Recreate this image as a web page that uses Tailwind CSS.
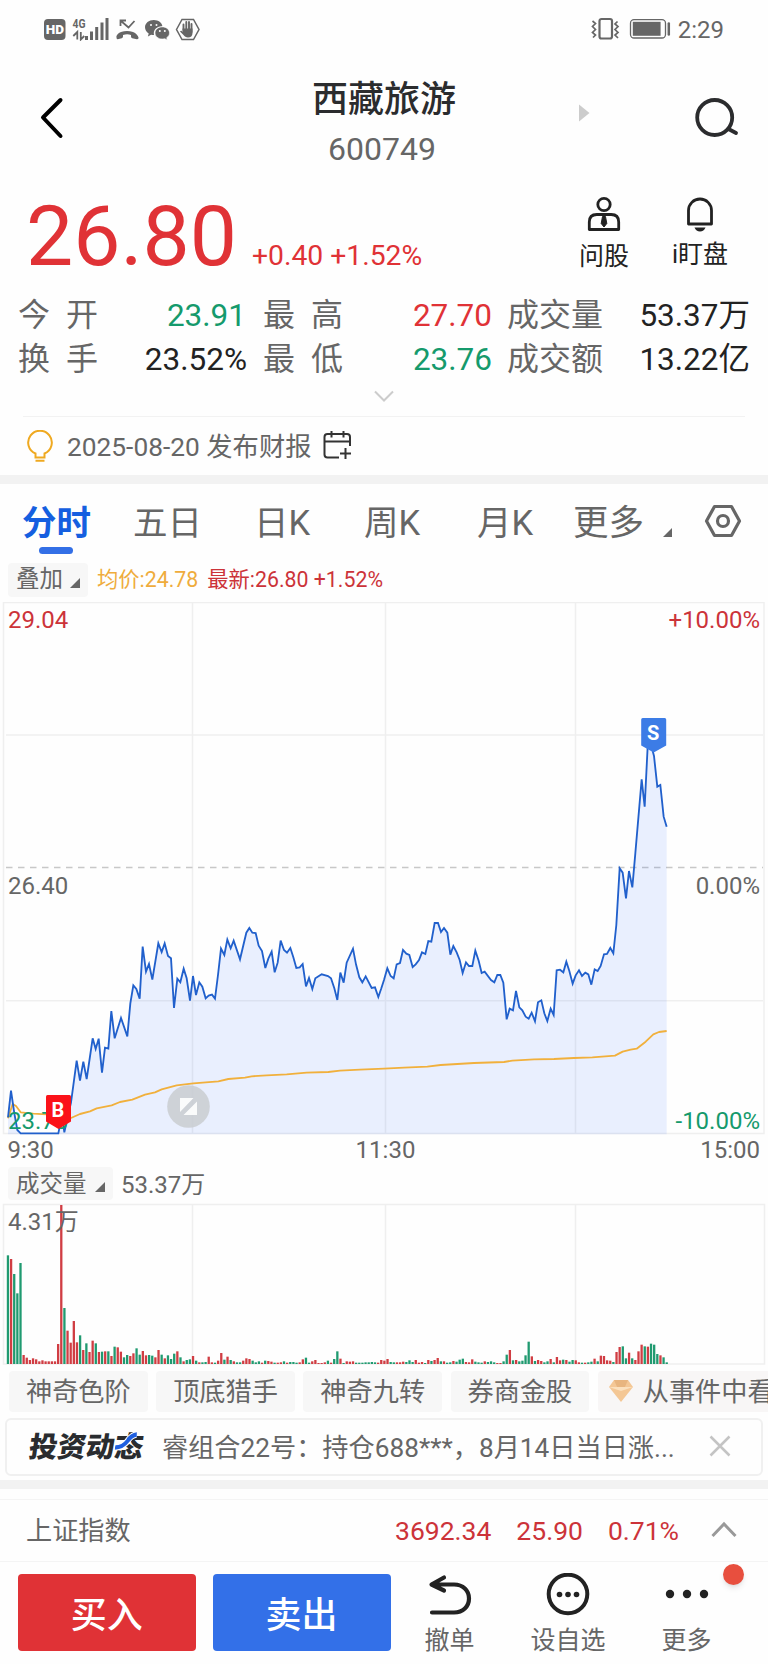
<!DOCTYPE html>
<html lang="zh-CN">
<head>
    <meta charset="UTF-8">
    <meta name="viewport" content="width=device-width, initial-scale=1.0">
    <title>西藏旅游 600749</title>
    <script src="https://cdn.jsdelivr.net/npm/@tailwindcss/browser@4"></script>
</head>
<body class="bg-white">
    <div class="w-[768px] h-[1664px] overflow-hidden flex flex-col bg-[#fefefe] font-[Roboto,'Noto_Sans_CJK_SC',sans-serif] text-[#666] leading-none whitespace-nowrap">

        <!-- Status bar -->
        <div class="h-[58px] shrink-0 flex items-center justify-between pl-11 pr-[44px]">
            <svg width="156" height="24" viewBox="0 0 156 24" fill="#666">
                <rect x="0" y="2" width="21.500" height="21" rx="4"/>
                <text x="10.800" y="17.300" font-size="13.500" font-weight="900" fill="#fff" text-anchor="middle">HD</text>
                <text x="28.500" y="11" font-size="13" font-weight="700" textLength="13" lengthAdjust="spacingAndGlyphs">4G</text>
                <path d="M33.300 22.500V15l-4 4M36.800 15v7.500l3.500-3.500" fill="none" stroke="#666" stroke-width="1.800"/>
                <path d="M41 19h3v4h-3zM46 14.500h3v8.500h-3zM51.200 10h3v13h-3zM56.500 5.500h3v17.500h-3zM61.500 1h3v22h-3z"/>
                <path d="M76.500 9V3.500H82M77 4l7.500 6.500L90.500 4" fill="none" stroke="#666" stroke-width="1.800"/>
                <path d="M72.500 20.500c-.5-2 1.500-4.500 4.500-5.500 4-1.300 8-1.300 12 0 3 1 5 3.500 5.500 5.500.2 1.200-.6 1.900-1.700 1.700l-4.500-1c-.8-.2-1.300-.8-1.300-1.600v-1.700c-2.600-.8-5-.8-8 0v1.700c0 .8-.5 1.400-1.300 1.600l-4 1c-.8.200-1.100-.7-1.200-1.700z"/>
                <path d="M109.800 3c4.600 0 8.200 2.800 8.600 6.300-5-.1-8.600 3.100-8.600 7 0 .7.100 1.300.3 1.800-1.100 0-2-.1-3-.4l-3.200 1.700.8-2.800c-2.300-1.500-3.700-3.700-3.700-6.300 0-4.100 3.900-7.300 8.800-7.300z"/>
                <path d="M118.300 9.900c4.200 0 7.200 2.700 7.200 6 0 2-1.100 3.700-2.800 4.800l.6 2.300-2.500-1.300c-.8.200-1.600.3-2.500.3-4.100 0-7.300-2.700-7.300-6.100s3.200-6 7.300-6z" stroke="#fefefe" stroke-width=".6"/>
                <g fill="#fefefe"><circle cx="107" cy="8" r="1"/><circle cx="112.500" cy="8" r="1"/><circle cx="115.800" cy="14" r="1"/><circle cx="120.800" cy="14" r="1"/></g>
                <path d="M132.500 12.500 138 2.500h11.500l5.500 10-5.500 10H138z" fill="none" stroke="#666" stroke-width="1.500"/>
                <path d="M139.500 7.500v5.500M142.300 5v8M145 5v8M147.500 7v8" stroke="#666" stroke-width="1.900" stroke-linecap="round"/>
                <path d="M138.500 11.500h10v4.500c0 3-1.800 4.500-4.500 4.500-2 0-3.500-1-4.500-2.500l-3.500-3.500c1-1.500 2-.5 2.500.5z"/>
            </svg>
            <div class="flex items-center gap-[7px]">
                <svg width="80" height="24" viewBox="0 0 80 24" fill="none" stroke="#666">
                    <rect x="8.500" y="2" width="12.500" height="19.500" rx="2" stroke-width="2.200"/>
                    <path d="m1.500 4 3 2.500-3 3 3 3-3 3 3 2.500-2.500 2.500M26.500 4.500l-2.500 2.500 3 2.500-3 3 3 3-3 2.500 3 3" stroke-width="1.700"/>
                    <rect x="39.500" y="2.700" width="35" height="18.300" rx="3.500" stroke-width="1.300"/>
                    <path d="M41.800 4.800h27.800v14H41.800z" fill="#666" stroke="none"/>
                    <path d="M77.800 6.500v11" stroke-width="2.500" stroke-linecap="round"/>
                </svg>
                <span class="text-2xl leading-none pt-[2px]">2:29</span>
            </div>
        </div>

        <!-- Title -->
        <div class="h-[116px] shrink-0 grid grid-cols-[190px_1fr_190px]">
            <svg class="ml-[38px] mt-[37px]" width="28" height="46" viewBox="0 0 28 46" fill="none" stroke="#000" stroke-width="4" stroke-linecap="round" stroke-linejoin="round"><path d="M22.500 5 5 22.500 22.500 41"/></svg>
            <div class="flex flex-col items-center pt-[22px]">
                <h1 class="text-4xl leading-[40px] font-medium text-[#2b2c2e]">西藏旅游</h1>
                <div class="text-[32px] leading-[40px] mt-[9px] -ml-[4px]">600749</div>
            </div>
            <div class="flex items-start">
                <svg class="mt-[46px] ml-[1px]" width="11" height="18" viewBox="0 0 11 18"><path d="M0 .5 10.500 9 0 17.500z" fill="#ccc"/></svg>
                <svg class="mt-[38px] ml-[104px]" width="46" height="42" viewBox="0 0 46 42" fill="none" stroke="#2b2c2e" stroke-width="3.800" stroke-linecap="round"><circle cx="20.700" cy="21.500" r="17.500"/><path d="m34.500 33 7.500 4"/></svg>
            </div>
        </div>

        <!-- Last price -->
        <div class="h-[119px] shrink-0 flex items-end justify-between pl-[26px] pr-10">
            <div class="flex items-baseline text-[#e03236] pb-[14px]">
                <span class="text-[84px] leading-[84px]">26.80</span>
                <span class="text-[28.300px] ml-[15px]">+0.40 +1.52%</span>
            </div>
            <div class="flex gap-[43px] text-[25px] text-[#222] pb-[24px]">
                <div class="flex flex-col items-center gap-[12px]">
                    <svg width="34" height="36" viewBox="0 0 34 36" fill="none" stroke="#222" stroke-width="2.800" stroke-linejoin="round"><circle cx="17" cy="8.500" r="6.200"/><path d="M2.300 33.500V26c0-5 3-7.500 7.500-7.500h14.400c4.500 0 7.500 2.500 7.500 7.500v7.500z"/><path d="M15.500 20.500h3l1.300 7L17 31l-2.800-3.500z" fill="#222" stroke-width="1"/></svg>
                    <span>问股</span>
                </div>
                <div class="flex flex-col items-center gap-[10px]">
                    <svg width="34" height="36" viewBox="0 0 34 36" fill="none" stroke="#222" stroke-width="2.800" stroke-linejoin="round"><path d="M5.500 28V14.500a11.500 11.500 0 0 1 23 0V28z"/><path d="M11.500 31.500h11c-1 2.500-3 4-5.500 4s-4.500-1.500-5.500-4z" fill="#222" stroke="none"/></svg>
                    <span>i盯盘</span>
                </div>
            </div>
        </div>

        <!-- Stats -->
        <div class="h-[123px] shrink-0 px-[18px] pt-[1px]">
            <div class="grid grid-cols-[104px_125px_16px_104px_125px_15px_auto_1fr] text-[32px] leading-[43.500px]">
                <span class="tracking-[16px]">今开</span><span class="text-right text-[31.500px] text-[#159a6c] pr-px">23.91</span><span></span>
                <span class="tracking-[16px]">最高</span><span class="text-right text-[31.500px] text-[#e03236]">27.70</span><span></span>
                <span>成交量</span><span class="text-right text-[31.500px] text-[#222]">53.37万</span>
                <span class="tracking-[16px]">换手</span><span class="text-right text-[31.500px] text-[#222]">23.52%</span><span></span>
                <span class="tracking-[16px]">最低</span><span class="text-right text-[31.500px] text-[#159a6c]">23.76</span><span></span>
                <span>成交额</span><span class="text-right text-[31.500px] text-[#222]">13.22亿</span>
            </div>
            <svg class="mx-auto mt-[8px]" width="22" height="14" viewBox="0 0 22 14" fill="none" stroke="#ccc" stroke-width="2"><path d="m2 2.500 9 9 9-9"/></svg>
        </div>

        <!-- Report notice -->
        <div class="h-[59px] shrink-0 mx-[23px] border-t border-[#f2f2f2] flex items-center text-[26.300px] pl-1">
            <svg width="26" height="32" viewBox="0 0 26 32" fill="none" stroke="#efa920" stroke-width="2"><path d="M8.500 27v-3.500A11.800 11.800 0 1 1 17.500 23.500V27M7.500 27.500h11M8.500 30.700h9"/></svg>
            <span class="ml-[14px] pt-[2px]">2025-08-20 发布财报</span>
            <svg class="ml-[12px] -mt-[2px]" width="29" height="30" viewBox="0 0 29 30" fill="none" stroke="#333" stroke-width="2"><path d="M16 27.500H4.500c-2 0-3-1-3-3V7c0-2 1-3 3-3H24c2 0 3 1 3 3v9M1.500 11.500H27M8.500 1v6.500M20.500 1v6.500M22.500 18v11M17 23.500h11"/></svg>
        </div>
        <div class="h-[9px] shrink-0 bg-[#f2f2f2]"></div>

        <!-- Tabs -->
        <div class="h-[78px] shrink-0 flex text-[34.500px] leading-[78px] pl-[22px]">
            <div class="relative w-[111px] font-bold text-[#155fe0]">分时<span class="absolute left-[17px] top-[63px] w-[34px] h-[7px] rounded bg-[#336fe6]"></span></div>
            <span class="w-[121px]">五日</span>
            <span class="w-[110px]">日K</span>
            <span class="w-[113px]">周K</span>
            <span class="w-[96px]">月K</span>
            <span class="text-[35.500px]">更多</span>
            <svg class="ml-[19px] mt-[44px]" width="9" height="9" viewBox="0 0 9 9"><path d="M9 0v9H0z" fill="#666"/></svg>
            <svg class="ml-[32px] mt-[20px]" width="38" height="34" viewBox="0 0 38 34" fill="none" stroke="#666" stroke-width="3.200" stroke-linejoin="round"><path d="M2.500 17 10.500 2.500h17L35.500 17l-8 14.500h-17z"/><circle cx="19" cy="17" r="5.500"/></svg>
        </div>

        <!-- Chart legend -->
        <div class="h-[40px] shrink-0 flex items-center pl-2 text-[21.300px]">
            <div class="w-[80px] h-[34px] -mt-[4px] bg-[#f7f7f7] rounded flex items-center pl-2 text-[23.500px]">叠加<svg class="ml-[7px] mt-[5px]" width="10" height="10" viewBox="0 0 9 9"><path d="M9 0v9H0z" fill="#666"/></svg></div>
            <span class="ml-[9px] -mt-[4px] text-[#efac3c]">均价:24.78</span>
            <span class="ml-[9px] -mt-[4px] text-[#cc3339]">最新:26.80 +1.52%</span>
        </div>

        <!-- Price chart -->
        <svg class="shrink-0" width="768" height="565" viewBox="0 0 768 565" font-size="24" fill="#666">
            <g fill="none" stroke="#efefef" stroke-width="1.500">
                <path d="M3.500 .5h760.500v531H3.500zM192.500 1v531M385.500 1v531M575.500 1v531M6 133h757M6 398.700h757"/>
                <path d="M6 265.500h757" stroke="#c8c8c8" stroke-dasharray="6.500 5.500"/>
            </g>
            <path id="area" transform="scale(.33333)" fill="#3370ff" fill-opacity=".1"/>
            <polyline id="avg" transform="scale(.33333)" fill="none" stroke="#f1b03c" stroke-width="5.500" stroke-linejoin="round" points="24,1549 38,1506 48,1512 62,1531 100,1535 140,1537 190,1556 213,1548 240,1536 270,1528 290,1519 335,1510 360,1500 397,1493 435,1478 465,1471 485,1462 530,1450 580,1444 655,1438 685,1431 735,1427 755,1423 800,1420 860,1417 920,1412 985,1410 1020,1406 1080,1403 1152,1400 1212,1397 1282,1394 1322,1389 1422,1383 1512,1380 1537,1376 1602,1372 1662,1371 1722,1368 1777,1366 1845,1361 1868,1349 1892,1343 1910,1340 1937,1319 1960,1297 1977,1290 2000,1287"/>
            <polyline id="price" transform="scale(.33333)" fill="none" stroke="#2160cc" stroke-width="5.500" points="24,1546 33,1466 43,1534 52,1584 62,1594 175,1594 180,1569 190,1569 193,1591 202,1550 213,1502 230,1376 240,1436 250,1379 260,1431 278,1309 287,1341 296,1310 306,1412 315,1337 325,1340 334,1227 344,1309 363,1248 382,1303 391,1204 400,1150 409,1161 419,1190 428,1034 438,1109 447,1086 457,1133 475,1024 485,1050 494,1024 504,1062 513,1069 522,1218 532,1130 541,1141 551,1100 560,1129 570,1196 579,1122 588,1179 598,1141 607,1154 617,1189 626,1181 636,1178 645,1190 654,1119 663,1040 673,1059 682,1013 692,1039 701,1016 720,1072 739,992 748,978 757,992 767,993 776,1031 786,1047 796,1098 805,1070 815,1049 824,1111 833,1082 842,1016 852,1044 861,1052 871,1038 880,1066 889,1098 899,1096 908,1086 918,1153 927,1128 937,1161 946,1129 965,1117 984,1122 993,1129 1003,1159 1012,1194 1021,1112 1031,1142 1040,1082 1059,1040 1068,1087 1078,1126 1087,1141 1097,1123 1115,1158 1125,1156 1135,1185 1144,1159 1152,1134 1162,1099 1172,1122 1181,1129 1190,1087 1200,1083 1209,1044 1219,1055 1228,1059 1238,1095 1247,1087 1257,1074 1266,1051 1276,1056 1285,1017 1294,1019 1304,963 1314,963 1323,990 1332,978 1342,992 1351,1058 1360,1032 1370,1051 1379,1074 1388,1113 1398,1081 1407,1092 1417,1092 1426,1046 1436,1076 1445,1113 1454,1109 1473,1134 1483,1141 1492,1119 1501,1119 1510,1142 1520,1252 1529,1220 1539,1225 1548,1167 1558,1216 1567,1225 1577,1244 1586,1250 1595,1232 1605,1258 1614,1201 1624,1195 1633,1234 1642,1257 1652,1220 1661,1239 1670,1105 1680,1103 1690,1111 1699,1079 1708,1107 1718,1145 1727,1120 1737,1105 1746,1122 1756,1112 1765,1117 1774,1148 1784,1102 1793,1107 1802,1092 1812,1057 1821,1056 1831,1038 1840,1054 1849,969 1859,799 1868,812 1878,889 1887,807 1897,856 1906,754 1925,532 1934,614 1943,434 1952,424 1962,462 1972,554 1981,549 1991,644 2000,674"/>
            <text x="8" y="25.500" fill="#cc3339">29.04</text>
            <text x="760" y="25.500" fill="#cc3339" text-anchor="end">+10.00%</text>
            <text x="8" y="292">26.40</text>
            <text x="760" y="292" text-anchor="end">0.00%</text>
            <text x="8" y="527" fill="#159a6c">23.76</text>
            <text x="760" y="527" fill="#159a6c" text-anchor="end">-10.00%</text>
            <text x="7.500" y="555.500">9:30</text>
            <text x="385.500" y="555.500" text-anchor="middle">11:30</text>
            <text x="760" y="555.500" text-anchor="end">15:00</text>
            <!-- Buy / sell markers -->
            <path d="M47.500 493h22a1.500 1.500 0 0 1 1.500 1.500v25l-12.500 7.500-12.500-7.500v-25a1.500 1.500 0 0 1 1.500-1.500z" fill="#fb1219"/>
            <text x="58" y="515" font-size="20" font-weight="700" fill="#fff" text-anchor="middle">B</text>
            <path d="M642.700 116h22a1.500 1.500 0 0 1 1.500 1.500v26l-12.500 7-12.500-7v-26a1.500 1.500 0 0 1 1.500-1.500z" fill="#3c7ce6"/>
            <text x="653.200" y="138" font-size="20" font-weight="700" fill="#fff" text-anchor="middle">S</text>
            <circle cx="188.500" cy="504.500" r="21.300" fill="#c9cdd0" fill-opacity=".85"/>
            <path d="M180 496h13.500L180 510zM197 499.500V513h-13.500z" fill="#fff" opacity=".9"/>
        </svg>

        <!-- Volume legend -->
        <div class="h-[36px] shrink-0 flex items-center pl-2 text-2xl leading-none">
            <div class="w-[105px] h-[33px] -mt-[3px] bg-[#f7f7f7] rounded flex items-center pl-2 pt-[3px] text-[23.500px]">成交量<svg class="ml-[8px] mt-[4px]" width="10" height="10" viewBox="0 0 9 9"><path d="M9 0v9H0z" fill="#666"/></svg></div>
            <span class="ml-[8px]">53.37万</span>
        </div>

        <!-- Volume chart -->
        <svg class="shrink-0" width="768" height="168" viewBox="0 0 768 168" font-size="24" fill="#666">
            <path d="M3.500 1.500H764.500V161H3.500zM192.500 1.500V161M385.500 1.500V161M575.500 1.500V161" fill="none" stroke="#efefef" stroke-width="1.500"/>
            <g id="volume"></g>
            <text x="8" y="26.500">4.31万</text>
        </svg>

        <!-- Indicator chips -->
        <div class="h-[41px] shrink-0 flex gap-[8.500px] pl-[9px] text-[26.200px]">
            <span class="w-[138.700px] shrink-0 bg-[#f7f7f7] rounded flex items-center justify-center pt-[2px]">神奇色阶</span>
            <span class="w-[138.700px] shrink-0 bg-[#f7f7f7] rounded flex items-center justify-center pt-[2px]">顶底猎手</span>
            <span class="w-[138.700px] shrink-0 bg-[#f7f7f7] rounded flex items-center justify-center pt-[2px]">神奇九转</span>
            <span class="w-[138.700px] shrink-0 bg-[#f7f7f7] rounded flex items-center justify-center pt-[2px]">券商金股</span>
            <span class="w-[220px] shrink-0 bg-[#f8f6f6] rounded flex items-center pl-[11px] pt-[2px]">
                <svg class="shrink-0 mr-[10px] -mt-[4px]" width="24" height="22" viewBox="0 0 24 22"><path d="M5 0h14l5 7-12 15L0 7z" fill="#f4c795"/><path d="M5 0h14l-3.500 8h-7z" fill="#e8b57f"/><path d="M0 7h24l-12 4z" fill="#fbe0bd"/></svg>从事件中看
            </span>
        </div>

        <!-- News -->
        <div class="h-[58px] shrink-0 mt-[6px] mx-[5px] border-2 border-[#f0f0f0] rounded-md flex items-center text-[26.200px] pl-[22px]">
            <span class="relative shrink-0 text-[28.500px] font-black text-[#2a2c2f] w-[114px] -skew-x-8 pt-[2px]">投资动态<svg class="absolute left-[86px] top-0" width="23" height="19" viewBox="0 0 23 19"><path d="M0 15.500c6 0 9-2 12-7 2-4 4-5.500 8-6" fill="none" stroke="#fefefe" stroke-width="6.500"/><path d="M0 15.500c6 0 9-2 12-7 2-4 4-5.500 8-6" fill="none" stroke="#2060e0" stroke-width="4.300"/></svg></span>
            <span class="ml-[19px] pt-[3px]">睿组合22号：持仓688***，8月14日当日涨...</span>
            <svg class="ml-auto mr-[30px] -mt-[3px]" width="22" height="22" viewBox="0 0 22 22" fill="none" stroke="#c4c4c4" stroke-width="2.500"><path d="m1.500 1.500 19 19M20.500 1.500l-19 19"/></svg>
        </div>
        <div class="h-[9px] shrink-0 mt-[4px] bg-[#f2f2f2]"></div>

        <!-- Index quote -->
        <div class="h-[63px] shrink-0 mt-[10px] border-y border-[#f4f4f4] flex items-center justify-between pl-[26px] pr-[31px] pt-[2px] text-[26.200px]">
            <span>上证指数</span>
            <div class="flex items-center text-[26.500px] text-[#cc3339]">
                <span>3692.34</span><span class="ml-[25px]">25.90</span><span class="ml-[25px]">0.71%</span>
                <svg class="ml-[32px] -mt-[5px]" width="26" height="17" viewBox="0 0 26 17" fill="none" stroke="#999" stroke-width="3"><path d="M1.500 15 13 3l11.500 12"/></svg>
            </div>
        </div>

        <!-- Action bar -->
        <div class="h-[102px] shrink-0 flex text-[25px]">
            <div class="ml-[18px] mt-[12px] w-[177.500px] h-[77px] rounded bg-[#e03236] text-white text-4xl leading-none font-medium flex items-center justify-center pt-1.5">买入</div>
            <div class="ml-[17px] mt-[12px] w-[178px] h-[77px] rounded bg-[#3370e8] text-white text-4xl leading-none font-medium flex items-center justify-center pt-1.5">卖出</div>
            <div class="w-[118px] flex flex-col items-center pt-[11px] gap-[12px]">
                <svg width="44" height="43" viewBox="0 0 44 43" fill="none" stroke="#222" stroke-width="4.200" stroke-linecap="round" stroke-linejoin="round"><path d="M16 4.500 3.500 11.500 16 17.500M4 11.500h22c9 0 15 6 15 14s-6 14-15 14H4"/></svg>
                <span>撤单</span>
            </div>
            <div class="w-[119px] flex flex-col items-center pt-[11px] gap-[12px]">
                <svg width="44" height="43" viewBox="0 0 44 43" fill="#222"><circle cx="22" cy="21" r="19.300" fill="none" stroke="#222" stroke-width="4"/><circle cx="13.500" cy="21.500" r="2.800"/><circle cx="22" cy="21.500" r="2.800"/><circle cx="30.500" cy="21.500" r="2.800"/></svg>
                <span>设自选</span>
            </div>
            <div class="relative w-[118px] flex flex-col items-center pt-[11px] gap-[12px]">
                <svg width="44" height="43" viewBox="0 0 44 43" fill="#222"><circle cx="5" cy="21" r="4.200"/><circle cx="22" cy="21" r="4.200"/><circle cx="39" cy="21" r="4.200"/></svg>
                <span>更多</span>
                <span class="absolute left-[95px] top-[2px] size-[21px] rounded-full bg-[#e84f3e] shadow-md"></span>
            </div>
        </div>
    </div>

    <script>
        // shade below the price line
        const pts = document.getElementById('price').getAttribute('points');
        document.getElementById('area').setAttribute('d', 'M24,1597 L' + pts + ' L2000,1597Z');

        // one bar per minute: r = up, g = down
        const bars = `g326 r315 g270 g212 g303 r27 r19 r12 r17 r14 r8 r11 r8 r8 r8 r8 r60 r477 g168 r100
            r64 r129 r65 g86 r42 g62 r36 r70 g62 r36 g37 r38 g38 r24 g52 r50 r37 g20 g27 r24
            r32 g47 g28 r39 r26 g27 g25 r20 r42 g28 r17 g26 g15 g31 r38 g20 r8 g12 g14 r24
            g10 r5 g5 g6 r22 r5 g4 r10 r33 g13 r22 g12 r8 g5 g5 r10 r17 r15 g10 g5
            g8 r4 g10 r9 r7 g4 r4 r5 g8 r4 g6 g6 g4 r5 r14 g19 g4 r8 r12 r3
            r3 r5 g10 r4 g15 g38 r16 g3 r8 r7 r8 g4 g4 g4 g5 g5 g6 g5 r4 r12
            r10 r15 g6 g5 r5 r5 r7 g6 g11 g6 r12 r4 r6 g3 r12 g9 r12 r18 g8 r8
            g4 g5 r9 g7 g13 g16 r6 r5 r14 g7 g5 g4 r8 g6 g8 g5 r3 r3 g8 g28
            r42 g11 r12 g8 g10 g26 g67 r23 g9 r12 r9 g5 g8 r15 g5 r21 r11 g13 r12 g7
            g12 r11 r5 g4 r4 g5 g7 r16 g8 r25 r24 r11 r10 g6 r36 r51 g53 g17 r34 g17
            r12 r38 r58 g53 r52 g61 g58 g30 r26 g20 g5`.trim().split(/\s+/);

        document.getElementById('volume').innerHTML = bars.map((bar, i) => {
            const h = bar.slice(1) / 3;
            const color = bar[0] === 'r' ? '#d03d43' : '#209a70';
            return `<rect x="${(6.8 + i * 3.137).toFixed(2)}" y="${(161 - h).toFixed(2)}" width="2.300" height="${h.toFixed(2)}" fill="${color}"/>`;
        }).join('');
    </script>
</body>
</html>
